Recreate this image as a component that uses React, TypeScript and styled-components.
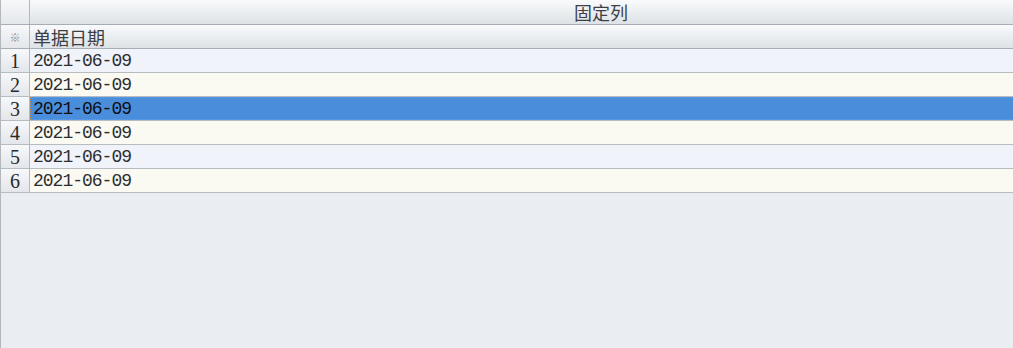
import React from "react";
import styled, { createGlobalStyle } from "styled-components";

const GlobalStyle = createGlobalStyle`
  html, body {
    margin: 0;
    padding: 0;
    width: 1013px;
    height: 348px;
    overflow: hidden;
    background: #eaeef2;
  }
`;

const Sheet = styled.div`
  width: 1171px;
  height: 348px;
  display: flex;
  flex-direction: column;
  border-left: 1px solid #b3b8bd;
  background: #eaeef2;
  font-family: "Liberation Mono", "Noto Sans CJK SC", monospace;
  color: #2e2e30;
`;

const Row = styled.div<{ $height: number; $line: string }>`
  display: flex;
  height: ${(p) => p.$height}px;
  border-bottom: 1px solid ${(p) => p.$line};
  flex-shrink: 0;
`;

const Indicator = styled.div<{ $header?: boolean }>`
  width: 29px;
  flex-shrink: 0;
  border-right: 1px solid #b3b8bd;
  display: flex;
  align-items: center;
  justify-content: center;
  padding-top: ${(p) => (p.$header ? 0 : 1)}px;
  box-sizing: border-box;
  background: linear-gradient(#f7f8fa, #e3e6ea);
  font-family: "Liberation Serif", "Noto Sans CJK SC", serif;
  font-size: ${(p) => (p.$header ? 11 : 20)}px;
  color: ${(p) => (p.$header ? "#8a8f96" : "#2a2a2e")};
`;

const HeaderCell = styled.div<{ $center?: boolean }>`
  flex: 1;
  display: flex;
  align-items: center;
  justify-content: ${(p) => (p.$center ? "center" : "flex-start")};
  padding-left: ${(p) => (p.$center ? 0 : 3)}px;
  background: linear-gradient(#f9fafc, #dde2e6);
  font-family: "Noto Sans CJK SC", sans-serif;
  font-size: 18px;
  color: #3d3f44;
`;

const Cell = styled.div<{ $odd: boolean; $selected: boolean }>`
  flex: 1;
  display: flex;
  align-items: center;
  padding: 1px 0 0 3px;
  font-size: 18px;
  letter-spacing: -1px;
  background: ${(p) =>
    p.$selected ? "#4a8edb" : p.$odd ? "#f0f3f9" : "#fafaf2"};
  color: ${(p) => (p.$selected ? "#0d0d10" : "#2e2e30")};
  outline: ${(p) => (p.$selected ? "1px dotted #c98a45" : "none")};
  outline-offset: -1px;
`;

const rows = ["2021-06-09", "2021-06-09", "2021-06-09", "2021-06-09", "2021-06-09", "2021-06-09"];
const selectedRow = 2;

export default function App() {
  return (
    <>
      <GlobalStyle />
      <Sheet>
        <Row $height={24} $line="#a6adb5">
          <Indicator $header />
          <HeaderCell $center>固定列</HeaderCell>
        </Row>
        <Row $height={23} $line="#a6adb5">
          <Indicator $header>※</Indicator>
          <HeaderCell>单据日期</HeaderCell>
        </Row>
        {rows.map((date, i) => (
          <Row key={i} $height={23} $line="#b7bcc1">
            <Indicator>{i + 1}</Indicator>
            <Cell $odd={i % 2 === 0} $selected={i === selectedRow}>
              {date}
            </Cell>
          </Row>
        ))}
      </Sheet>
    </>
  );
}
